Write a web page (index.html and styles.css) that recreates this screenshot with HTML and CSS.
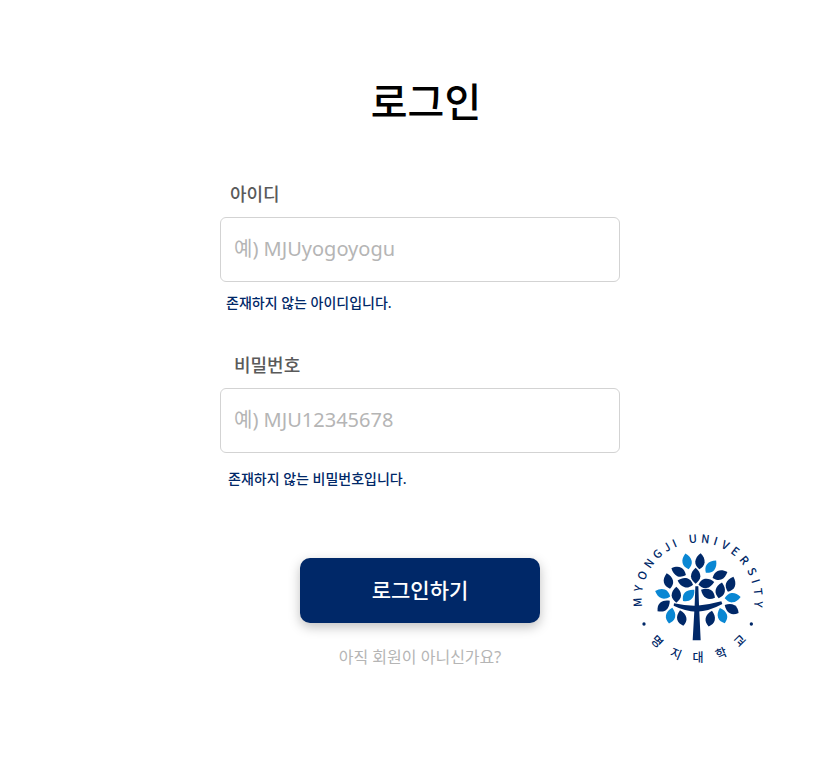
FILE: index.html
```html
<!DOCTYPE html>
<html lang="ko">
<head>
  <meta charset="UTF-8">
  <meta name="viewport" content="width=device-width, initial-scale=1.0">
  <title>로그인</title>
  <link rel="stylesheet" href="styles.css">
</head>
<body>

  <main class="wrapper">
    <h1 class="title">로그인</h1>

    <form class="login-form">
      <div class="field">
        <label for="userId">아이디</label>
        <input id="userId" type="text" placeholder="예) MJUyogoyogu">
        <p class="error">존재하지 않는 아이디입니다.</p>
      </div>

      <div class="field field-pw">
        <label for="userPw">비밀번호</label>
        <input id="userPw" type="password" placeholder="예) MJU12345678">
        <p class="error">존재하지 않는 비밀번호입니다.</p>
      </div>

      <button class="login-btn" type="submit">로그인하기</button>
      <a class="join-link" href="#">아직 회원이 아니신가요?</a>
    </form>

    <!-- 학교 로고 -->
    <svg class="logo" viewBox="0 0 435 435" role="img" aria-label="명지대학교">
      <defs>
        <path id="leaf" d="M0,-24 C9,-16 14,-8 14,2 C14,11 8,18 0,24 C-8,18 -14,11 -14,2 C-14,-8 -9,-16 0,-24 Z"/>
      </defs>

      <!-- 나무 기둥 -->
      <g class="navy">
        <path d="M211,184 L220,184 L222,240 L227,346 L203,346 L209,240 Z"/>
        <path d="M147,235 Q182,243 215,242 Q250,240 289,229 L292,237 Q252,259 215,260 Q180,259 146,242 Z"/>
      </g>

      <!-- 나뭇잎 -->
      <g class="navy">
        <use href="#leaf" transform="translate(225,109) rotate(5)"/>
        <use href="#leaf" transform="translate(161,140) rotate(-65)"/>
        <use href="#leaf" transform="translate(285,150) rotate(68)"/>
        <use href="#leaf" transform="translate(212,152)"/>
        <use href="#leaf" transform="translate(130,168) rotate(-12)"/>
        <use href="#leaf" transform="translate(181,173) rotate(-75)"/>
        <use href="#leaf" transform="translate(244,175) rotate(80)"/>
        <use href="#leaf" transform="translate(317,178) rotate(20)"/>
        <use href="#leaf" transform="translate(286,196) rotate(12)"/>
        <use href="#leaf" transform="translate(249,206) rotate(-60)"/>
        <use href="#leaf" transform="translate(154,209)"/>
        <use href="#leaf" transform="translate(116,243) rotate(50)"/>
        <use href="#leaf" transform="translate(320,252) rotate(-60)"/>
        <use href="#leaf" transform="translate(170,279) rotate(-12)"/>
        <use href="#leaf" transform="translate(256,281) rotate(12)"/>
      </g>
      <g class="blue">
        <use href="#leaf" transform="translate(186,109) rotate(-12)"/>
        <use href="#leaf" transform="translate(258,125) rotate(40)"/>
        <use href="#leaf" transform="translate(113,206) rotate(-70)"/>
        <use href="#leaf" transform="translate(191,211) rotate(45)"/>
        <use href="#leaf" transform="translate(323,218) rotate(85)"/>
        <use href="#leaf" transform="translate(137,272) rotate(12)"/>
        <use href="#leaf" transform="translate(292,272) rotate(-18)"/>
      </g>

      <!-- 둘레 글자 -->
      <g class="navy ring-en" transform="translate(219,222)">
        <text y="-169" transform="rotate(-93)">M</text>
        <text y="-169" transform="rotate(-80)">Y</text>
        <text y="-169" transform="rotate(-67)">O</text>
        <text y="-169" transform="rotate(-54)">N</text>
        <text y="-169" transform="rotate(-42)">G</text>
        <text y="-169" transform="rotate(-31)">J</text>
        <text y="-169" transform="rotate(-23)">I</text>
        <text y="-169" transform="rotate(-5)">U</text>
        <text y="-169" transform="rotate(7)">N</text>
        <text y="-169" transform="rotate(17)">I</text>
        <text y="-169" transform="rotate(27)">V</text>
        <text y="-169" transform="rotate(38)">E</text>
        <text y="-169" transform="rotate(50)">R</text>
        <text y="-169" transform="rotate(63)">S</text>
        <text y="-169" transform="rotate(73)">I</text>
        <text y="-169" transform="rotate(83)">T</text>
        <text y="-169" transform="rotate(95)">Y</text>
      </g>
      <g class="navy ring-ko" transform="translate(219,222)">
        <text y="190" transform="rotate(44)">명</text>
        <text y="190" transform="rotate(22)">지</text>
        <text y="190">대</text>
        <text y="190" transform="rotate(-23)">학</text>
        <text y="190" transform="rotate(-45)">교</text>
      </g>
      <circle class="navy" cx="57" cy="297" r="5"/>
      <circle class="navy" cx="379" cy="297" r="5"/>
    </svg>
  </main>

</body>
</html>
```

FILE: styles.css
```css
*{
  box-sizing: border-box;
}

body{
  margin: 0;
  background: #fff;
  font-family: "Noto Sans", "Noto Sans CJK KR", sans-serif;
}

.wrapper{
  position: relative;
  min-height: 100vh;
  padding: 72px 20px 40px;
}

.title{
  margin: 0;
  padding-left: 12px;
  font-size: 40px;
  font-weight: 500;
  line-height: 60px;
  text-align: center;
  color: #000;
}

.login-form{
  display: flex;
  flex-direction: column;
  align-items: center;
  max-width: 400px;
  margin: 48px auto 0;
}

.field{
  width: 100%;
}

.field label{
  display: block;
  padding-left: 10px;
  margin-bottom: 9px;
  font-size: 18px;
  font-weight: 500;
  line-height: 28px;
  color: #5a5a5a;
}

.field input{
  display: block;
  width: 100%;
  height: 65px;
  padding: 0 13px 2px;
  border: 1px solid #d3d3d3;
  border-radius: 6px;
  background: #fff;
  font-family: inherit;
  font-size: 20px;
  color: #333;
  outline: none;
}

.field input::placeholder{
  color: #b5b5b5;
  opacity: 1;
}

.error{
  margin: 11px 0 0;
  padding-left: 6px;
  font-size: 14px;
  font-weight: 500;
  line-height: 20px;
  color: #002868;
}

.field-pw{
  margin-top: 38px;
}

.field-pw label{
  padding-left: 14px;
}

.field-pw .error{
  margin-top: 16px;
  padding-left: 8px;
}

.login-btn{
  width: 240px;
  height: 65px;
  margin-top: 69px;
  padding: 0 0 4px;
  border: none;
  border-radius: 10px;
  background: #002868;
  box-shadow: 0 4px 12px rgba(0, 0, 0, 0.25);
  font-family: inherit;
  font-size: 21px;
  font-weight: 500;
  color: #fff;
  cursor: pointer;
}

.join-link{
  margin-top: 22px;
  font-size: 16px;
  line-height: 24px;
  color: #b5b5b5;
  text-decoration: none;
}

/* 로고 */
.logo{
  position: absolute;
  top: 525px;
  right: 70px;
  width: 145px;
  height: 145px;
}

.navy{
  fill: #002868;
}

.blue{
  fill: #0a87d3;
}

.ring-en,
.ring-ko{
  font-family: "Noto Sans CJK KR", sans-serif;
  font-weight: 500;
  text-anchor: middle;
}

.ring-en{
  font-size: 34px;
}

.ring-ko{
  font-size: 36px;
}
```
